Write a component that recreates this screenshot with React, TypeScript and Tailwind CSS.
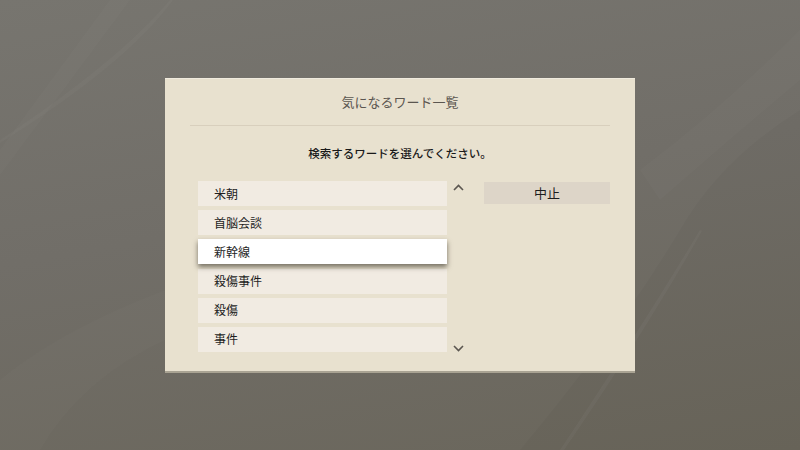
import React from "react";

const items = ["米朝", "首脳会談", "新幹線", "殺傷事件", "殺傷", "事件"];

export default function App() {
  return (
    <div
      className="relative w-[800px] h-[450px] overflow-hidden bg-[linear-gradient(170deg,#77756f_0%,#716e68_45%,#6a665b_100%)]"
      style={{ fontFamily: '"Noto Sans CJK JP", "Noto Sans", sans-serif' }}
    >
      <svg className="absolute inset-0" width="800" height="450" viewBox="0 0 800 450">
        <path d="M0 150 L110 0 L130 0 L0 175 Z" fill="#ffffff" opacity="0.015" />
        <path d="M0 140 Q120 60 170 0 L173 0 Q125 65 0 143 Z" fill="#ffffff" opacity="0.025" />
        <path d="M640 170 Q720 110 800 30 L800 80 Q740 130 660 200 Z" fill="#ffffff" opacity="0.02" />
        <path d="M520 450 Q620 330 680 230 Q720 160 800 110 L800 450 Z" fill="#000000" opacity="0.025" />
        <path d="M560 450 Q640 330 700 230 L702 231 Q643 335 564 450 Z" fill="#ffffff" opacity="0.03" />
        <path d="M0 450 L0 380 Q60 330 165 290 L165 340 Q80 380 40 450 Z" fill="#ffffff" opacity="0.015" />
      </svg>
      <div className="relative pt-[78px] pl-[165px]">
        <div className="w-[470px] h-[295px] bg-[#e8e1cf] flex flex-col border-t border-t-[#f0ebde] border-b-2 border-b-[#a9a393]">
          <div className="h-[46px] flex items-center justify-center text-[13px] text-[#5b5650]">
            気になるワード一覧
          </div>
          <div className="h-px bg-[#d8cfbd] mx-[25px]" />
          <div className="h-[55px] flex items-center justify-center text-[11.5px] font-medium text-[#1a1a1a]">
            検索するワードを選んでください。
          </div>
          <div className="flex pl-[33px]">
            <div className="w-[249px] flex flex-col gap-[4.2px]">
              {items.map((t, i) =>
                i === 2 ? (
                  <div
                    key={t}
                    className="h-[25px] bg-white flex items-center pl-[16px] text-[12px] text-[#1e1e1e] shadow-[0_3px_5px_rgba(40,35,25,0.6)] relative z-10"
                  >
                    {t}
                  </div>
                ) : (
                  <div
                    key={t}
                    className="h-[25px] bg-[#f1ebe2] flex items-center pl-[16px] text-[12px] text-[#1e1e1e]"
                  >
                    {t}
                  </div>
                )
              )}
            </div>
            <div className="w-[37px] flex flex-col items-center justify-between pt-[3px] pb-[0px]">
              <svg width="11" height="7" viewBox="0 0 11 7" className="ml-[-15px]">
                <path d="M1 6 L5.5 1.5 L10 6" fill="none" stroke="#5b5650" strokeWidth="1.6" />
              </svg>
              <svg width="11" height="7" viewBox="0 0 11 7" className="ml-[-15px]">
                <path d="M1 1 L5.5 5.5 L10 1" fill="none" stroke="#5b5650" strokeWidth="1.6" />
              </svg>
            </div>
            <div className="pt-[1px]">
              <div className="w-[126px] h-[22px] bg-[#ddd5c8] flex items-center justify-center text-[13px] text-[#1e1e1e]">
                中止
              </div>
            </div>
          </div>
        </div>
      </div>
    </div>
  );
}
